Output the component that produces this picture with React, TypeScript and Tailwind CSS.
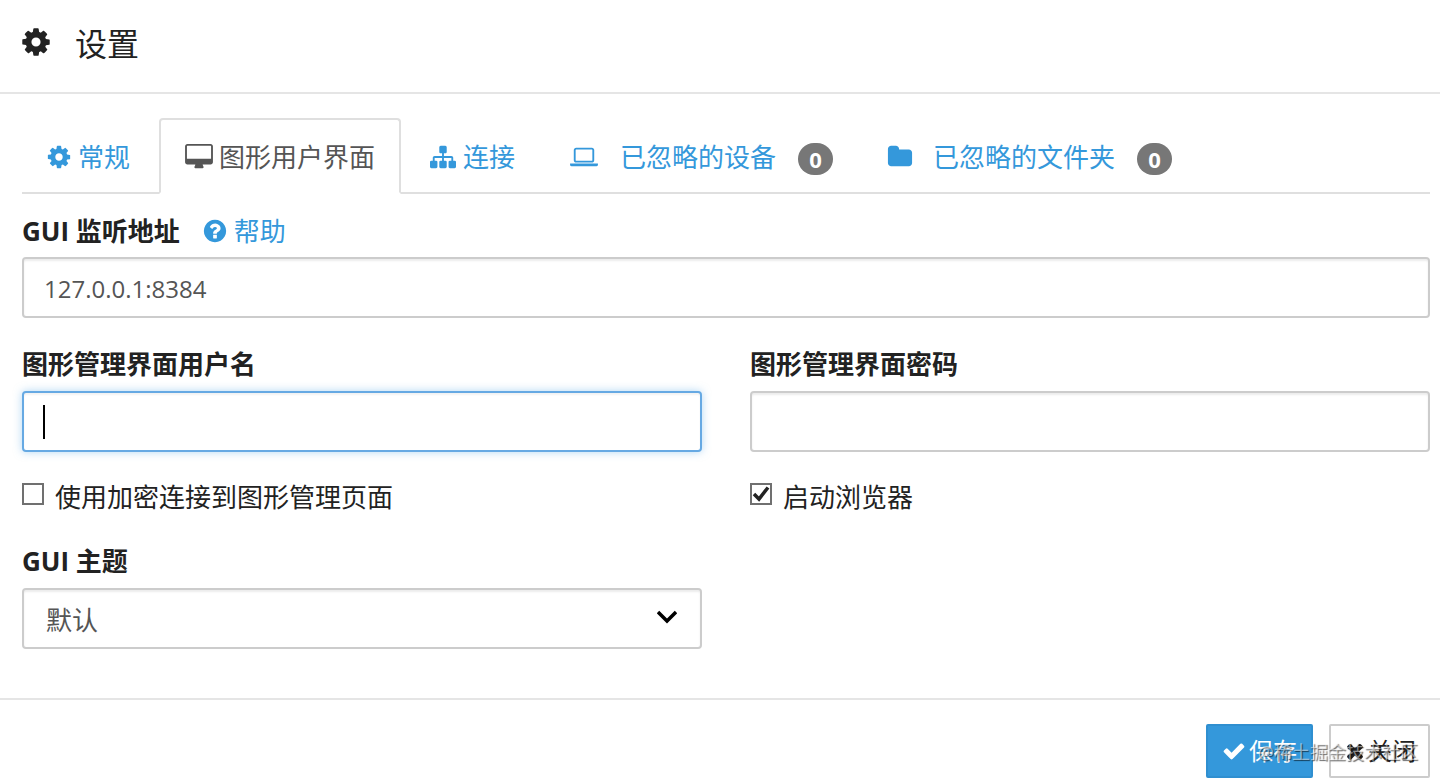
import type { ReactNode } from "react";

type IconProps = { d: string; width?: number; className: string };

function Glyph({ d, width = 1792, className }: IconProps) {
  return (
    <svg viewBox={`0 0 ${width} 1792`} fill="currentColor" aria-hidden="true" className={`shrink-0 ${className}`}>
      <path d={d} />
    </svg>
  );
}

const COG =
  "M1152 896q0-106-75-181t-181-75-181 75-75 181 75 181 181 75 181-75 75-181zm512-109v222q0 12-8 23t-20 13l-185 28q-19 54-39 91 35 50 107 138 10 12 10 25t-9 23q-27 37-99 108t-94 71q-12 0-26-9l-138-108q-44 23-91 38-16 136-29 186-7 28-36 28h-222q-14 0-24.5-8.5t-11.5-21.5l-28-184q-49-16-90-37l-141 107q-10 9-25 9-14 0-25-11-126-114-165-168-7-10-7-23 0-12 8-23 15-21 51-66.5t54-70.5q-27-50-41-99l-183-27q-13-2-21-12.500t-8-23.500v-222q0-12 8-23t19-13l186-28q14-46 39-92-40-57-107-138-10-12-10-24 0-10 9-23 26-36 98.500-107.500t94.500-71.500q13 0 26 10l138 107q44-23 91-38 16-136 29-186 7-28 36-28h222q14 0 24.500 8.500t11.500 21.500l28 184q49 16 90 37l142-107q9-9 24-9 13 0 25 10 129 119 165 170 7 8 7 22 0 12-8 23-15 21-51 66.500t-54 70.500q26 50 41 98l183 28q13 2 21 12.500t8 23.500z";
const DESKTOP =
  "M1792 992v-832q0-13-9.5-22.5t-22.5-9.5h-1600q-13 0-22.5 9.5t-9.5 22.5v832q0 13 9.5 22.5t22.5 9.5h1600q13 0 22.5-9.5t9.5-22.500zm128-832v1088q0 66-47 113t-113 47h-544q0 37 16 77.500t32 71 16 43.500q0 26-19 45t-45 19h-512q-26 0-45-19t-19-45q0-14 16-44t32-70 16-78h-544q-66 0-113-47t-47-113v-1088q0-66 47-113t113-47h1600q66 0 113 47t47 113z";
const SITEMAP =
  "M1792 1248v320q0 40-28 68t-68 28h-320q-40 0-68-28t-28-68v-320q0-40 28-68t68-28h96v-192h-512v192h96q40 0 68 28t28 68v320q0 40-28 68t-68 28h-320q-40 0-68-28t-28-68v-320q0-40 28-68t68-28h96v-192h-512v192h96q40 0 68 28t28 68v320q0 40-28 68t-68 28h-320q-40 0-68-28t-28-68v-320q0-40 28-68t68-28h96v-192q0-52 38-90t90-38h512v-192h-96q-40 0-68-28t-28-68v-320q0-40 28-68t68-28h320q40 0 68 28t28 68v320q0 40-28 68t-68 28h-96v192h512q52 0 90 38t38 90v192h96q40 0 68 28t28 68z";
const LAPTOP =
  "M416 1280q-66 0-113-47t-47-113v-704q0-66 47-113t113-47h1088q66 0 113 47t47 113v704q0 66-47 113t-113 47h-1088zm-32-864v704q0 13 9.5 22.5t22.5 9.5h1088q13 0 22.5-9.500t9.500-22.500v-704q0-13-9.500-22.500t-22.500-9.500h-1088q-13 0-22.500 9.500t-9.500 22.500zm1376 928h160v96q0 40-47 68t-113 28h-1600q-66 0-113-28t-47-68v-96h1760z";
const FOLDER =
  "M1728 608v704q0 92-66 158t-158 66h-1216q-92 0-158-66t-66-158v-960q0-92 66-158t158-66h320q92 0 158 66t66 158v32h672q92 0 158 66t66 158z";
const HELP =
  "M1024 1376v-192q0-14-9-23t-23-9h-192q-14 0-23 9t-9 23v192q0 14 9 23t23 9h192q14 0 23-9t9-23zm256-672q0-88-55.5-163t-138.5-116-170-41q-243 0-371 213-15 24 8 42l132 100q7 6 19 6 16 0 25-12 53-68 86-92 34-24 86-24 48 0 85.5 26t37.5 59q0 38-20 61t-68 45q-63 28-115.500 86.500t-52.500 125.500v36q0 14 9 23t23 9h192q14 0 23-9t9-23q0-19 21.500-49.500t54.500-49.500q32-18 49-28.500t46-35 44.500-48 28-60.500 12.500-81zm384 192q0 209-103 385.500t-279.500 279.500-385.500 103-385.500-103-279.500-279.500-103-385.500 103-385.500 279.500-279.500 385.500-103 385.500 103 279.500 279.500 103 385.500z";
const CHECK =
  "M1671 566q0 40-28 68l-724 724-136 136q-28 28-68 28t-68-28l-136-136-362-362q-28-28-28-68t28-68l136-136q28-28 68-28t68 28l294 295 656-657q28-28 68-28t68 28l136 136q28 28 28 68z";
const TIMES =
  "M1490 1322q0 40-28 68l-136 136q-28 28-68 28t-68-28l-294-294-294 294q-28 28-68 28t-68-28l-136-136q-28-28-28-68t28-68l294-294-294-294q-28-28-28-68t28-68l136-136q28-28 68-28t68 28l294 294 294-294q28-28 68-28t68 28l136 136q28 28 28 68t-28 68l-294 294 294 294q28 28 28 68z";

function Tab({ active = false, children }: { active?: boolean; children: ReactNode }) {
  return (
    <button
      type="button"
      role="tab"
      aria-selected={active}
      className={
        active
          ? "-mb-0.5 flex h-[76px] items-center rounded-t-sm border-2 border-b-white border-[#dfdfdf] bg-white px-6 pt-0.5 whitespace-nowrap text-[#555555]"
          : "-mb-0.5 flex h-[76px] items-center border-2 border-transparent px-6 pt-0.5 whitespace-nowrap text-[#3498db]"
      }
    >
      {children}
    </button>
  );
}

function Badge({ children }: { children: ReactNode }) {
  return (
    <span className="mt-1 ml-[22px] flex h-8 min-w-[35px] items-center justify-center rounded-full bg-[#777777] text-[22px] leading-8 font-bold text-white">
      {children}
    </span>
  );
}

function CheckRow({ id, label, defaultChecked }: { id: string; label: string; defaultChecked?: boolean }) {
  return (
    <div className="flex h-10 items-center">
      <span className="relative mb-1.5 flex size-[22px]">
        <input
          id={id}
          type="checkbox"
          defaultChecked={defaultChecked}
          className="peer size-[22px] appearance-none border-2 border-[#707070] bg-white"
        />
        <svg
          viewBox="0 0 22 22"
          fill="none"
          stroke="#222222"
          strokeWidth="3.5"
          aria-hidden="true"
          className="pointer-events-none absolute inset-0 hidden peer-checked:block"
        >
          <path d="M4 11l5 5L18 4.500" />
        </svg>
      </span>
      <label htmlFor={id} className="pl-[11px]">
        {label}
      </label>
    </div>
  );
}

const field =
  "block h-[61px] w-full rounded-sm border-2 border-[#cccccc] bg-white px-5 pt-0.5 text-2xl text-[#555555] shadow-[inset_0_2px_2px_rgba(0,0,0,0.075)] outline-none";
const focusedField =
  "block h-[61px] w-full rounded-sm border-2 border-[#66a9e3] bg-white px-5 pt-0.5 text-2xl text-[#555555] caret-transparent shadow-[inset_0_2px_2px_rgba(0,0,0,0.05),0_0_8px_rgba(102,175,233,0.5)] outline-none";

export default function App() {
  return (
    <main className="min-h-screen bg-white font-['Open_Sans','Noto_Sans_CJK_SC',sans-serif] text-[26px] leading-9 text-[#222222]">
      <header className="flex h-[94px] items-center border-b-2 border-[#e5e5e5] pb-1 pl-5">
        <Glyph d={COG} className="mb-1 size-8" />
        <h1 className="pl-[23px] text-[32px] leading-10">设置</h1>
      </header>

      <div className="pt-6 pr-2.5 pl-[22px]">
        <div role="tablist" className="flex gap-[3px] border-b-2 border-[#dfdfdf]">
          <Tab>
            <Glyph d={COG} className="-ml-0.5 size-[26px]" />
            <span className="pl-1.5">常规</span>
          </Tab>
          <Tab active>
            <Glyph d={DESKTOP} width={1920} className="h-[26px] w-7" />
            <span className="pl-1.5">图形用户界面</span>
          </Tab>
          <Tab>
            <Glyph d={SITEMAP} className="size-[26px]" />
            <span className="pl-[7px]">连接</span>
          </Tab>
          <Tab>
            <Glyph d={LAPTOP} width={1920} className="h-[26px] w-7" />
            <span className="pl-[22px]">已忽略的设备</span>
            <Badge>0</Badge>
          </Tab>
          <Tab>
            <Glyph d={FOLDER} className="-ml-px size-[26px]" />
            <span className="pl-5">已忽略的文件夹</span>
            <Badge>0</Badge>
          </Tab>
        </div>

        <form id="settings" onSubmit={(e) => e.preventDefault()}>
          <div className="flex h-[63px] items-center pt-3.5 pb-1">
            <label htmlFor="address" className="font-bold">
              GUI 监听地址
            </label>
            <a href="#help" className="flex items-center pl-[22px] text-[#3498db]">
              <Glyph d={HELP} className="size-[26px]" />
              <span className="pl-1.5">帮助</span>
            </a>
          </div>
          <input id="address" type="text" defaultValue="127.0.0.1:8384" className={field} />

          <div className="grid grid-cols-2 gap-x-12 pt-7">
            <div>
              <label htmlFor="user" className="block h-[45px] font-bold">
                图形管理界面用户名
              </label>
              <div className="relative">
                <input id="user" type="text" className={focusedField} />
                <span className="pointer-events-none absolute top-3.5 left-[21px] h-[34px] w-0.5 bg-black" />
              </div>
            </div>
            <div>
              <label htmlFor="password" className="block h-[45px] font-bold">
                图形管理界面密码
              </label>
              <input id="password" type="password" className={field} />
            </div>
          </div>

          <div className="grid grid-cols-2 gap-x-12 pt-[25px]">
            <CheckRow id="tls" label="使用加密连接到图形管理页面" />
            <CheckRow id="browser" label="启动浏览器" defaultChecked />
          </div>

          <div className="grid grid-cols-2 gap-x-12 pt-[26px]">
            <div>
              <label htmlFor="theme" className="block h-[45px] font-bold">
                GUI 主题
              </label>
              <div className="relative">
                <select
                  id="theme"
                  className="block h-[61px] w-full appearance-none rounded-sm border-2 border-[#cccccc] bg-white px-[22px] pt-0.5 text-[#555555] shadow-[inset_0_2px_2px_rgba(0,0,0,0.075)] outline-none"
                >
                  <option>默认</option>
                </select>
                <svg
                  viewBox="0 0 20 14"
                  fill="none"
                  stroke="#000000"
                  strokeWidth="3.5"
                  aria-hidden="true"
                  className="pointer-events-none absolute top-[22px] right-[25px] h-3.5 w-5"
                >
                  <path d="M1 2l9 9 9-9" />
                </svg>
              </div>
            </div>
          </div>
        </form>
      </div>

      <footer className="relative mt-[49px] flex justify-end gap-4 border-t-2 border-[#e5e5e5] pt-6 pr-2.5 pb-1.5 text-2xl">
        <button
          type="submit"
          form="settings"
          className="flex h-[54px] items-center rounded-xs border-2 border-[#2f8fd0] bg-[#3498db] px-3.5 text-white"
        >
          <Glyph d={CHECK} className="size-6" />
          <span className="pl-[3px]">保存</span>
        </button>
        <button
          type="button"
          className="flex h-[54px] items-center rounded-xs border-2 border-[#cccccc] bg-white px-3 text-[#222222]"
        >
          <Glyph d={TIMES} className="size-6" />
          <span className="pl-px">关闭</span>
        </button>
        <span className="pointer-events-none absolute right-[22px] bottom-5 text-lg leading-6 whitespace-nowrap text-white/50 [text-shadow:1px_1px_1px_rgba(0,0,0,0.6)]">
          @稀土掘金技术社区
        </span>
      </footer>
    </main>
  );
}
